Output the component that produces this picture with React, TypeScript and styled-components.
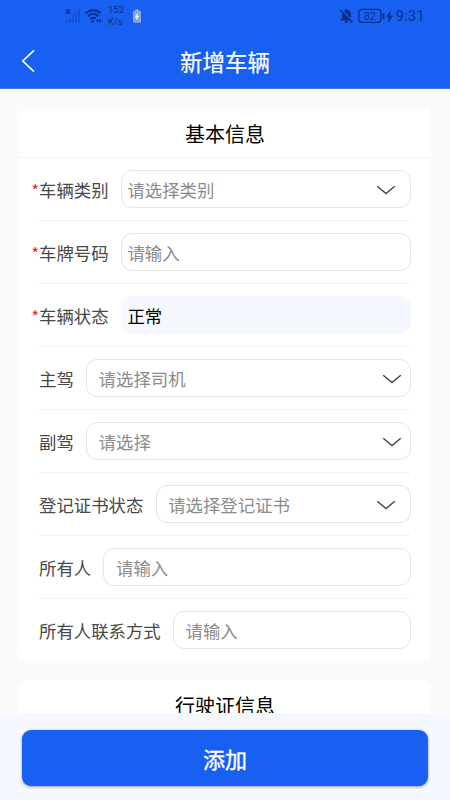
import React from 'react';
import styled, { createGlobalStyle } from 'styled-components';

const BLUE = '#1860f2';
const INK = '#0b2f86';

const GlobalStyle = createGlobalStyle`
  * { box-sizing: border-box; }
  body {
    margin: 0;
    background: #fafafa;
    font-family: "Noto Sans CJK SC", sans-serif;
  }
`;

const Screen = styled.div`
  display: flex;
  flex-direction: column;
  width: 450px;
  height: 800px;
  overflow: hidden;
  background: #fafafa;
`;

const Header = styled.header`
  flex: none;
  height: 89px;
  background: ${BLUE};
  border-bottom: 1px solid #3b79e6;
  color: #fff;
`;

const StatusBar = styled.div`
  display: flex;
  align-items: center;
  justify-content: space-between;
  height: 32px;
  padding: 0 25px 0 65px;
  color: ${INK};
  font-family: Roboto, sans-serif;
`;

const StatusGroup = styled.div`
  display: flex;
  align-items: center;
  height: 32px;
`;

const StatusIcon = styled.svg<{ $gap?: number }>`
  display: block;
  flex: none;
  margin-right: ${(p) => p.$gap ?? 0}px;
`;

const Speed = styled.div`
  width: 25px;
  font-size: 9.5px;
  line-height: 12px;
`;

const Clock = styled.span`
  padding-top: 2px;
  font-family: Roboto, sans-serif;
  font-size: 14.5px;
  line-height: 32px;
  letter-spacing: 0.3px;
`;

const NavBar = styled.div`
  display: grid;
  grid-template-columns: 60px 1fr 60px;
  align-items: center;
  height: 57px;
`;

const BackButton = styled.button`
  display: flex;
  align-items: center;
  height: 57px;
  padding: 1px 0 0 20px;
  border: 0;
  background: none;
`;

const PageTitle = styled.h1`
  margin: 0;
  padding-top: 1px;
  text-align: center;
  font-size: 22.5px;
  line-height: 34px;
  font-weight: 400;
  -webkit-text-stroke: 0.2px #fff;
`;

const Content = styled.main`
  flex: 1;
  min-height: 0;
  overflow: hidden;
  padding: 19px 19px 0;
`;

const Card = styled.section`
  height: 553px;
  margin-bottom: 19px;
  border-radius: 9px;
  background: #fff;
`;

const CardTitle = styled.h2`
  height: 50px;
  margin: 0;
  padding-top: 1px;
  border-bottom: 1px solid #f3f3f3;
  text-align: center;
  font-size: 20px;
  line-height: 50px;
  font-weight: 400;
  color: #000;
`;

const Row = styled.div`
  display: flex;
  align-items: center;
  gap: 12.3px;
  height: 63px;
  margin: 0 20px;
  border-bottom: 1px solid #f3f3f3;

  &:last-child { border-bottom-color: transparent; }
`;

const Label = styled.label`
  flex: none;
  padding-top: 1px;
  font-size: 17.4px;
  line-height: 26px;
  color: #484848;
`;

const Required = styled.span`
  display: inline-block;
  width: 7.5px;
  margin-left: -7.5px;
  color: #e8202a;
  font-family: "Noto Sans CJK SC", sans-serif;
  font-size: 16px;
  line-height: 20px;
`;

const Field = styled.div<{ $inset: number; $arrow: number; $filled?: boolean }>`
  display: flex;
  align-items: center;
  justify-content: space-between;
  flex: 1;
  height: 38px;
  padding: 1px ${(p) => p.$arrow}px 0 ${(p) => p.$inset - 1}px;
  border: 1px solid ${(p) => (p.$filled ? '#f5f8fe' : '#e6e6e6')};
  border-radius: 11px;
  background: ${(p) => (p.$filled ? '#f5f8fe' : '#fff')};
  color: ${(p) => (p.$filled ? '#000' : '#8c8c8c')};
  font-size: 17.4px;
  line-height: 26px;
`;

const Footer = styled.footer`
  flex: none;
  height: 87px;
  padding: 17px 22px 0;
  background: #f5f8fe;
`;

const SubmitButton = styled.button`
  display: block;
  width: 100%;
  height: 56px;
  padding: 0;
  border: 0;
  border-radius: 9px;
  background: ${BLUE};
  box-shadow: 0 1px 3px rgba(0, 0, 0, 0.4);
  color: #fff;
  font-family: inherit;
  font-size: 22px;
  font-weight: 400;
  -webkit-text-stroke: 0.4px #fff;
`;

type FieldSpec = {
  label: string;
  text: string;
  required?: boolean;
  select?: boolean;
  filled?: boolean;
  inset?: number;
  arrow?: number;
};

const fields: FieldSpec[] = [
  { label: '车辆类别', text: '请选择类别', required: true, select: true, inset: 6.5, arrow: 14 },
  { label: '车牌号码', text: '请输入', required: true, inset: 6.5 },
  { label: '车辆状态', text: '正常', required: true, filled: true, inset: 6.5 },
  { label: '主驾', text: '请选择司机', select: true },
  { label: '副驾', text: '请选择', select: true },
  { label: '登记证书状态', text: '请选择登记证书', select: true, arrow: 14 },
  { label: '所有人', text: '请输入' },
  { label: '所有人联系方式', text: '请输入' },
];

const Chevron = () => (
  <svg width="20" height="12" viewBox="0 0 20 12" fill="none" stroke="#484848" strokeWidth="1.5">
    <path d="M1.2 2.2 10 9.6l8.8-7.4" />
  </svg>
);

const SignalIcon = () => (
  <StatusIcon $gap={5} width="15" height="16" viewBox="0 0 15 16" fill="none" stroke={INK}>
    <path d="M1 1.8l4 4M5 1.8l-4 4" strokeWidth="1.5" />
    <path d="M2 12v2.8M5 10v4.8M8 7.5v7.3M11 4.5v10.3M14 1.5v13.3" strokeWidth="1.3" opacity=".45" />
  </StatusIcon>
);

const WifiIcon = () => (
  <StatusIcon $gap={6} width="17" height="16" viewBox="0 0 17 16" fill="none" stroke={INK} strokeWidth="2">
    <path d="M.8 5.4c4.2-4.1 10.8-4.1 15 0M3.2 8.2c3-2.8 7.2-2.8 10.2 0M5.6 11c1.8-1.5 3.6-1.5 5.2-.2" />
    <circle cx="7.8" cy="13.3" r="1.4" fill={INK} stroke="none" />
    <path d="M13.1 10.7l-2.3 2 2.3 2zM14 10.7l2.6 2-2.6 2z" fill={INK} stroke="none" />
  </StatusIcon>
);

const ChargeIcon = () => (
  <StatusIcon width="8" height="14" viewBox="0 0 9 15">
    <path d="M2.5 0h4v1.7H8a1 1 0 0 1 1 1V14a1 1 0 0 1-1 1H1a1 1 0 0 1-1-1V2.7a1 1 0 0 1 1-1h1.5z" fill="#86a9dc" />
    <path d="M5.3 4L2 8.9h2.1L3.6 12.400 7 7.6H4.9z" fill="#fff" />
  </StatusIcon>
);

const MutedBellIcon = () => (
  <StatusIcon $gap={4} width="15" height="16" viewBox="0 0 15 16">
    <path d="M7.5 1c.7 0 1.1.4 1.1 1 2.4.6 3.4 2.4 3.4 4.7v3.6l2 2.2H1l2-2.2V6.7C3 4.400 4.100 2.600 6.400 2c0-.6.4-1 1.100-1zM5.700 13.300h3.600c-.2 1.100-.9 1.700-1.800 1.700s-1.600-.6-1.800-1.700z" fill={INK} />
    <path d="M2 1l12.5 13" stroke={BLUE} strokeWidth="1.4" />
    <path d="M1 1.8l12.5 13" stroke={INK} strokeWidth="1.4" />
  </StatusIcon>
);

const BatteryIcon = () => (
  <StatusIcon $gap={1} width="27" height="16" viewBox="0 0 27 16">
    <rect x=".8" y="1.3" width="22" height="13" rx="3" fill="none" stroke={INK} strokeWidth="1.3" />
    <path d="M25.5 5v6" stroke={INK} strokeWidth="1.8" />
    <text x="11.8" y="11.6" textAnchor="middle" fontFamily="Roboto" fontSize="10.5" fill={INK}>82</text>
  </StatusIcon>
);

const BoltIcon = () => (
  <StatusIcon $gap={3} width="7" height="13" viewBox="0 0 7 13">
    <path d="M4.5 0L0 7.3h2.8L2.2 13 7 5.4H4.1z" fill={INK} />
  </StatusIcon>
);

const FormRow = ({ label, text, required, select, filled, inset = 12.5, arrow = 8 }: FieldSpec) => (
  <Row>
    <Label>
      {required && <Required>*</Required>}
      {label}
    </Label>
    <Field $inset={inset} $arrow={arrow} $filled={filled}>
      <span>{text}</span>
      {select && <Chevron />}
    </Field>
  </Row>
);

export default function App() {
  return (
    <>
      <GlobalStyle />
      <Screen>
        <Header>
          <StatusBar>
            <StatusGroup>
              <SignalIcon />
              <WifiIcon />
              <Speed>152<br />K/s</Speed>
              <ChargeIcon />
            </StatusGroup>
            <StatusGroup>
              <MutedBellIcon />
              <BatteryIcon />
              <BoltIcon />
              <Clock>9:31</Clock>
            </StatusGroup>
          </StatusBar>
          <NavBar>
            <BackButton aria-label="返回">
              <svg width="16" height="24" viewBox="0 0 16 24" fill="none" stroke="#fff" strokeWidth="1.7">
                <path d="M14 1.3 2.8 12 14 22.7" />
              </svg>
            </BackButton>
            <PageTitle>新增车辆</PageTitle>
          </NavBar>
        </Header>
        <Content>
          <Card>
            <CardTitle>基本信息</CardTitle>
            {fields.map((field) => (
              <FormRow key={field.label} {...field} />
            ))}
          </Card>
          <Card>
            <CardTitle>行驶证信息</CardTitle>
          </Card>
        </Content>
        <Footer>
          <SubmitButton>添加</SubmitButton>
        </Footer>
      </Screen>
    </>
  );
}
